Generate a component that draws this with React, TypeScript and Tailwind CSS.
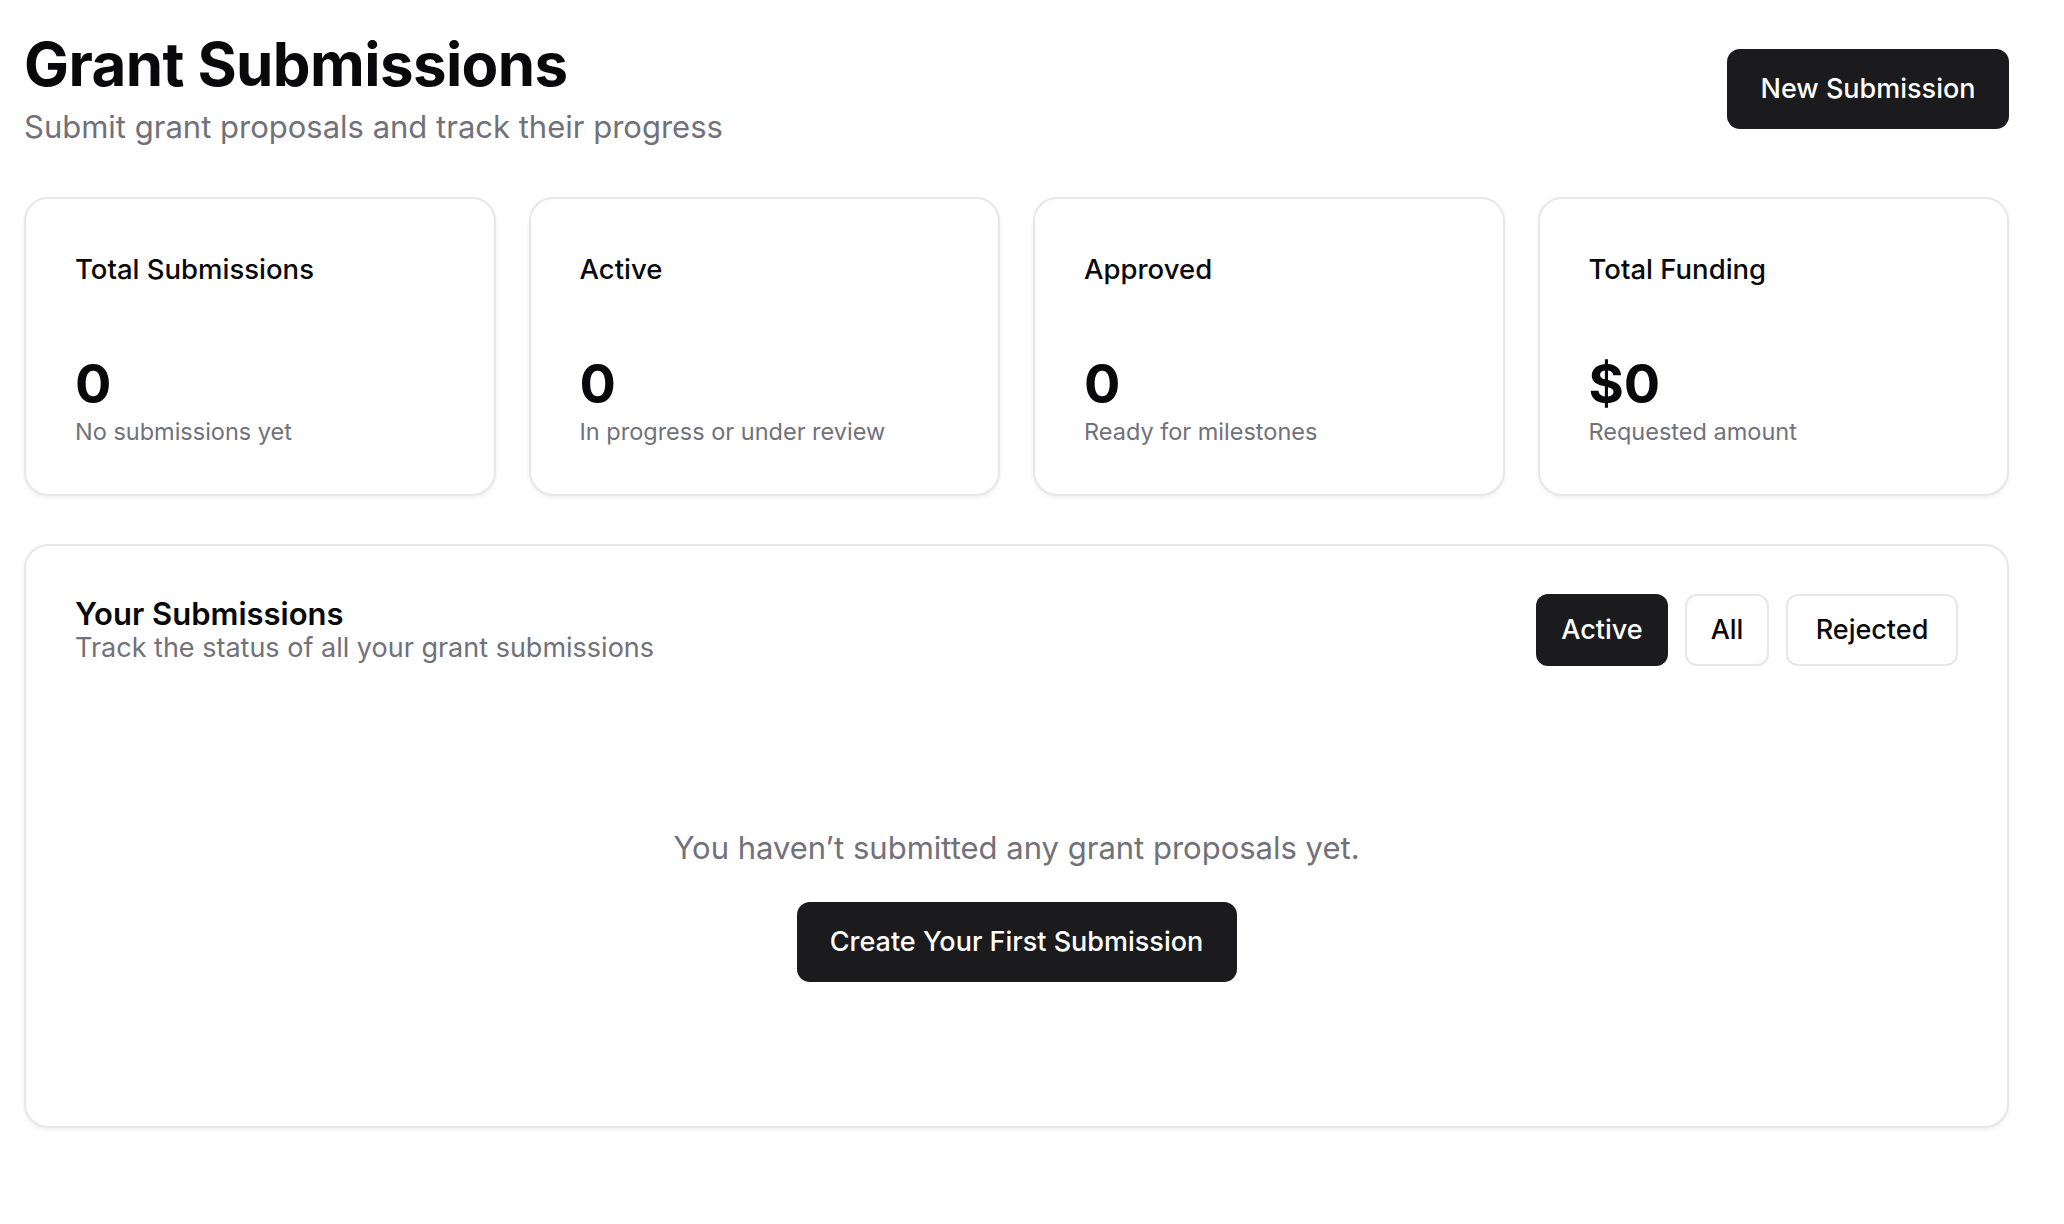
import React from 'react'

const stats = [
  { label: 'Total Submissions', value: '0', hint: 'No submissions yet' },
  { label: 'Active', value: '0', hint: 'In progress or under review' },
  { label: 'Approved', value: '0', hint: 'Ready for milestones' },
  { label: 'Total Funding', value: '$0', hint: 'Requested amount' },
]

const tabs = [
  { label: 'Active', width: 'w-[132px]' },
  { label: 'All', width: 'w-[84px]' },
  { label: 'Rejected', width: 'w-[172px]' },
]

function StatCard({ label, value, hint }: { label: string; value: string; hint: string }) {
  return (
    <div className="h-[299px] rounded-[24px] border-2 border-[#e7e7e9] bg-white px-[49px] pt-[52px] shadow-[0_2px_4px_rgba(0,0,0,0.06)]">
      <h3 className="text-[27.5px] font-medium leading-[36px] text-[#09090b]">{label}</h3>
      <div className="mt-[67px] text-[54px] font-bold leading-[60px] text-[#09090b]">{value}</div>
      <p className="text-[23.5px] leading-[36px] text-[#71717a]">{hint}</p>
    </div>
  )
}

export default function App() {
  const [tab, setTab] = React.useState('Active')

  return (
    <div className="min-h-screen bg-white font-['Inter',sans-serif] text-[#09090b]">
      <div className="pl-6 pr-[55px] pt-[32px]">
        <header className="flex items-start justify-between">
          <div>
            <h1 className="text-[60px] font-bold leading-[64px] tracking-[-0.01em]">Grant Submissions</h1>
            <p className="mt-[10px] text-[31px] leading-[42px] text-[#71717a]">
              Submit grant proposals and track their progress
            </p>
          </div>
          <button className="mt-[17px] flex h-[80px] w-[282px] items-center justify-center rounded-[13px] bg-[#1b1b1d] text-[27px] font-medium text-white">
            New Submission
          </button>
        </header>

        <div className="mt-[49px] grid grid-cols-4 gap-[33px]">
          {stats.map((s) => (
            <StatCard key={s.label} {...s} />
          ))}
        </div>

        {/* Submissions list */}
        <section className="mt-[48px] h-[584px] rounded-[24px] border-2 border-[#e7e7e9] bg-white px-[49px] pt-[50px] shadow-[0_2px_4px_rgba(0,0,0,0.06)]">
          <div className="flex items-start justify-between">
            <div>
              <h2 className="text-[31px] font-semibold leading-[36px]">Your Submissions</h2>
              <p className="-mt-[2px] text-[27px] leading-[36px] text-[#71717a]">
                Track the status of all your grant submissions
              </p>
            </div>
            <div className="-mt-[2px] flex gap-[17px]">
              {tabs.map((t) => (
                <button
                  key={t.label}
                  onClick={() => setTab(t.label)}
                  className={
                    'flex h-[72px] items-center justify-center rounded-[12px] text-[27px] font-medium ' +
                    t.width +
                    (tab === t.label
                      ? ' bg-[#1b1b1d] text-white'
                      : ' border-2 border-[#e7e7e9] bg-white text-[#09090b]')
                  }
                >
                  {t.label}
                </button>
              ))}
            </div>
          </div>

          <div className="mt-[161px] flex flex-col items-center">
            <p className="text-[31px] leading-[42px] text-[#71717a]">
              You haven&rsquo;t submitted any grant proposals yet.
            </p>
            <button className="mt-[33px] flex h-[80px] w-[440px] items-center justify-center rounded-[13px] bg-[#1b1b1d] text-[27px] font-medium text-white">
              Create Your First Submission
            </button>
          </div>
        </section>
      </div>
    </div>
  )
}
